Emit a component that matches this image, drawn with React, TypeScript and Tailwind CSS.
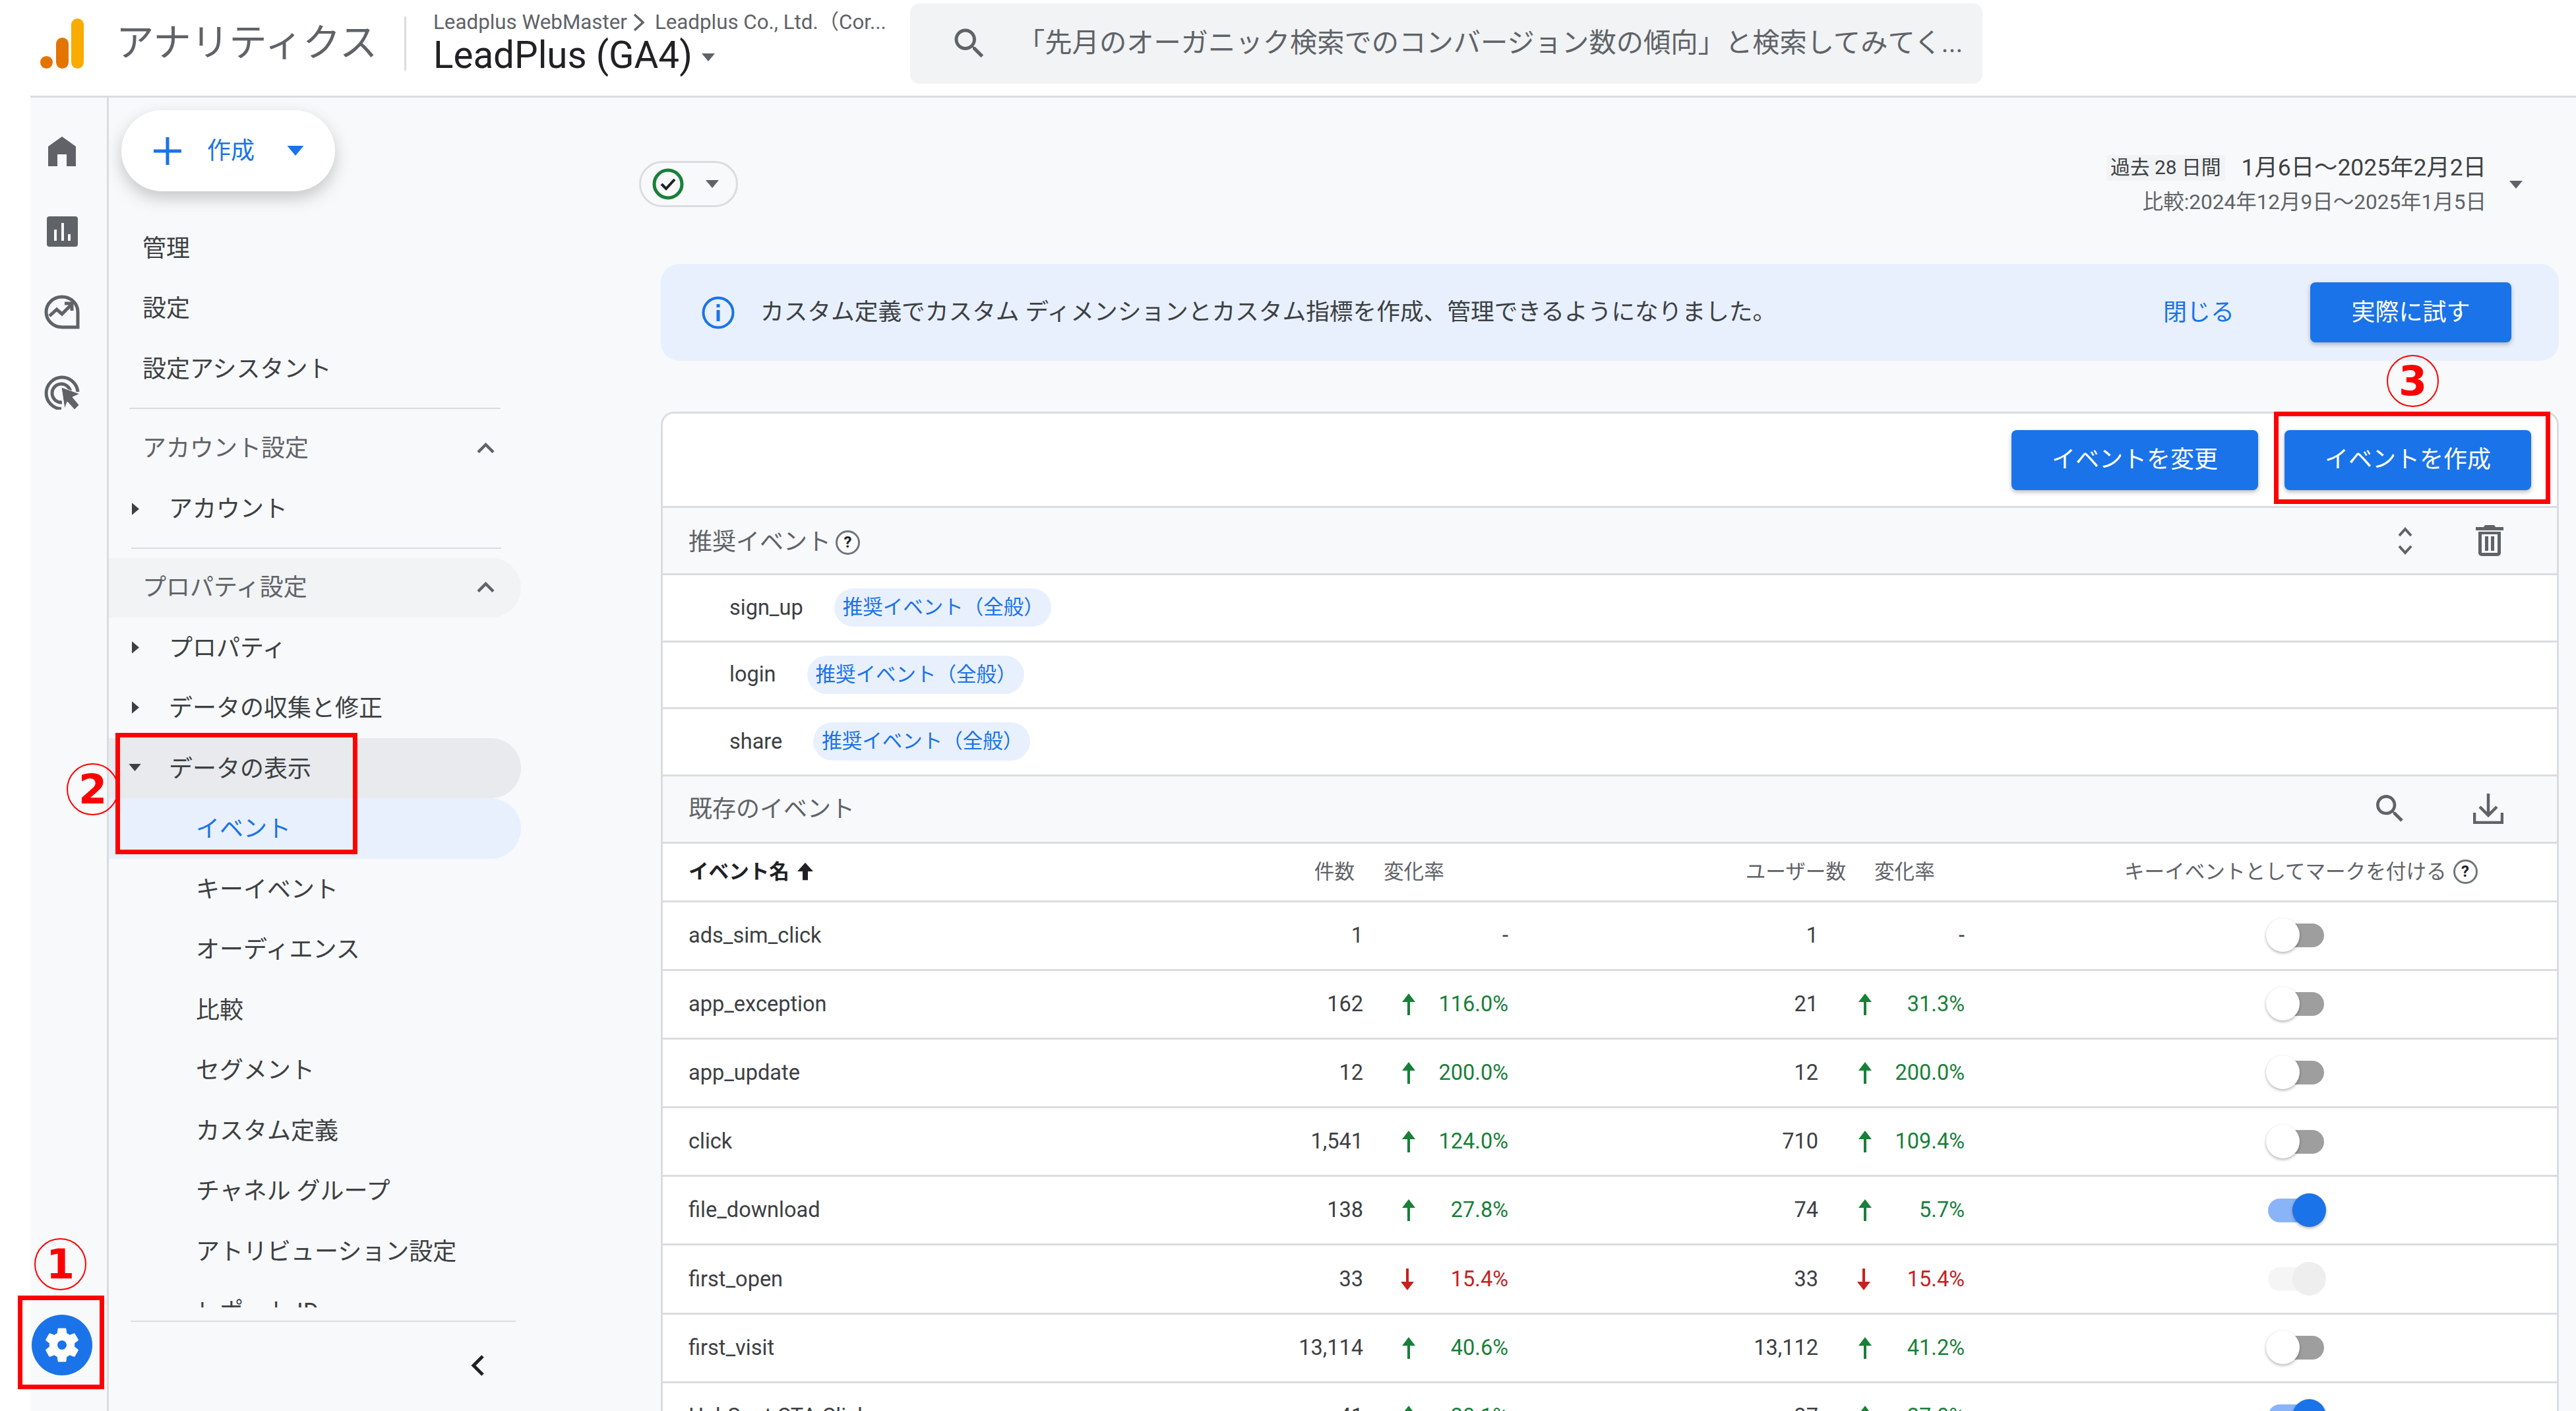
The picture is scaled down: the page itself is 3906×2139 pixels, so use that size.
import { ReactNode } from 'react';

const rows = [
  { name: 'ads_sim_click', count: '1', change: '-', users: '1', userChange: '-', toggle: 'off' },
  { name: 'app_exception', count: '162', change: '116.0%', dir: 'up', users: '21', userChange: '31.3%', userDir: 'up', toggle: 'off' },
  { name: 'app_update', count: '12', change: '200.0%', dir: 'up', users: '12', userChange: '200.0%', userDir: 'up', toggle: 'off' },
  { name: 'click', count: '1,541', change: '124.0%', dir: 'up', users: '710', userChange: '109.4%', userDir: 'up', toggle: 'off' },
  { name: 'file_download', count: '138', change: '27.8%', dir: 'up', users: '74', userChange: '5.7%', userDir: 'up', toggle: 'on' },
  { name: 'first_open', count: '33', change: '15.4%', dir: 'down', users: '33', userChange: '15.4%', userDir: 'down', toggle: 'disabled' },
  { name: 'first_visit', count: '13,114', change: '40.6%', dir: 'up', users: '13,112', userChange: '41.2%', userDir: 'up', toggle: 'off' },
  { name: 'HubSpot CTA Click', count: '41', change: '20.1%', dir: 'up', users: '37', userChange: '27.0%', userDir: 'up', toggle: 'on' },
];

function Caret({ className = '' }: { className?: string }) {
  return (
    <svg viewBox="0 0 10 6" className={className} fill="currentColor">
      <path d="M0 0h10L5 6z" />
    </svg>
  );
}

function Search({ className = '' }: { className?: string }) {
  return (
    <svg viewBox="0 0 24 24" className={className} fill="currentColor">
      <path d="M15.5 14h-.79l-.28-.27C15.41 12.59 16 11.11 16 9.5 16 5.91 13.09 3 9.5 3S3 5.91 3 9.5 5.91 16 9.5 16c1.61 0 3.09-.59 4.23-1.57l.27.28v.79l5 4.99L20.49 19l-4.99-5zm-6 0C7.01 14 5 11.99 5 9.5S7.01 5 9.5 5 14 7.01 14 9.5 11.99 14 9.5 14z" />
    </svg>
  );
}

function Arrow({ dir }: { dir?: string }) {
  if (!dir) return <span className="w-[24px]" />;
  return (
    <svg viewBox="0 0 24 33" className={`w-[24px] h-[33px] ${dir === 'up' ? 'text-[#188038]' : 'text-[#c5221f] rotate-180 -translate-x-[2px]'}`} fill="currentColor">
      <path d="M12 0l10 13h-8v20h-4V13H2z" />
    </svg>
  );
}

function Toggle({ state }: { state: string }) {
  if (state === 'on') {
    return (
      <div className="relative w-[85px] h-[36px] rounded-full bg-[#8ab4f8]">
        <span className="absolute right-[-3px] top-[-8px] w-[51px] h-[51px] rounded-full bg-[#1a73e8] shadow-[0_2px_4px_rgba(0,0,0,0.3)]" />
      </div>
    );
  }
  if (state === 'disabled') {
    return (
      <div className="relative w-[85px] h-[36px] rounded-full bg-[#f5f5f5]">
        <span className="absolute right-[-3px] top-[-8px] w-[51px] h-[51px] rounded-full bg-[#eeeeee]" />
      </div>
    );
  }
  return (
    <div className="relative w-[85px] h-[36px] rounded-full bg-[#9e9e9e]">
      <span className="absolute left-[-3px] top-[-8px] w-[51px] h-[51px] rounded-full bg-white shadow-[0_2px_4px_rgba(0,0,0,0.3)]" />
    </div>
  );
}

function Help({ className = '' }: { className?: string }) {
  return (
    <span className={`inline-flex items-center justify-center w-[37px] h-[37px] rounded-full border-[3px] border-[#70757a] bg-white text-[24px] font-bold leading-none text-[#202124] ${className}`}>
      ?
    </span>
  );
}

function NavItem({ children, arrow, indent, className = '' }: { children: ReactNode; arrow?: 'right' | 'down'; indent?: boolean; className?: string }) {
  return (
    <div className={`relative h-[91.5px] flex items-center shrink-0 rounded-r-full ${indent ? 'pl-[132px]' : 'pl-[91px]'} ${className}`}>
      {arrow === 'right' && (
        <svg viewBox="0 0 6 10" className="absolute left-[35px] top-[36px] w-[11px] h-[19px]" fill="#3c4043"><path d="M0 0l6 5-6 5z" /></svg>
      )}
      {arrow === 'down' && (
        <svg viewBox="0 0 10 6" className="absolute left-[30px] top-[39px] w-[19px] h-[11px]" fill="#3c4043"><path d="M0 0h10L5 6z" /></svg>
      )}
      {children}
    </div>
  );
}

function Chevron({ className = '' }: { className?: string }) {
  return (
    <svg viewBox="0 0 27 16" className={className} fill="none" stroke="#5f6368" strokeWidth="4.5">
      <path d="M2 14.5L13.5 3 25 14.5" />
    </svg>
  );
}

function RecRow({ name }: { name: string }) {
  return (
    <div className="h-[101.5px] shrink-0 flex items-center pl-[101px] gap-[47px] bg-white border-b-[3px] border-[#dadce0]">
      <span className="text-[32.5px] text-[#3c4043]">{name}</span>
      <span className="h-[58px] w-[329px] rounded-full bg-[#e8f0fe] flex items-center pl-[13px] text-[30.5px] text-[#1a73e8] whitespace-nowrap">推奨イベント（全般）</span>
    </div>
  );
}

function TableRow({ row }: { row: (typeof rows)[number] }) {
  return (
    <div className="h-[104.2px] grid grid-cols-[923px_100px_220px_470px_222px_1fr] items-center pl-[39px] bg-white border-b-[3px] border-[#dadce0] text-[32.5px] text-[#3c4043] shrink-0">
      <span className="text-[#3c4043]">{row.name}</span>
      <span className="text-right">{row.count}</span>
      <span className="flex items-center pl-[57px]">
        <Arrow dir={row.dir} />
        <span className={`flex-1 text-right ${row.dir === 'up' ? 'text-[#188038]' : row.dir === 'down' ? 'text-[#c5221f]' : ''}`}>{row.change}</span>
      </span>
      <span className="text-right">{row.users}</span>
      <span className="flex items-center pl-[59px]">
        <Arrow dir={row.userDir} />
        <span className={`flex-1 text-right ${row.userDir === 'up' ? 'text-[#188038]' : row.userDir === 'down' ? 'text-[#c5221f]' : ''}`}>{row.userChange}</span>
      </span>
      <span className="pl-[460px]"><Toggle state={row.toggle} /></span>
    </div>
  );
}

function CircleNum({ n, className = '' }: { n: string; className?: string }) {
  return (
    <span className={`absolute flex items-center justify-center w-[79px] h-[79px] rounded-full border-[2px] border-[#ff0000] text-[#ff0000] text-[62px] font-bold leading-none font-['DejaVu_Sans',sans-serif] ${className}`}>
      {n}
    </span>
  );
}

export default function App() {
  return (
    <div className="relative w-[3906px] h-[2139px] overflow-hidden bg-white flex font-['Roboto','Noto_Sans_CJK_JP',sans-serif] text-[#3c4043]">
      <div className="w-[46px] shrink-0 bg-white" />

      <div className="flex-1 flex flex-col min-w-0">
        {/* Header */}
        <header className="relative h-[148px] shrink-0 flex items-center border-b-[3px] border-[#dadce0] bg-white">
          <svg viewBox="0 0 66 76" className="ml-[15px] w-[66px] h-[76px] -mt-[14px] shrink-0">
            <rect x="0" y="57" width="19" height="19" rx="9.5" fill="#e37400" />
            <rect x="24" y="29" width="19" height="47" rx="9.5" fill="#e37400" />
            <rect x="47" y="0" width="19" height="76" rx="9.5" fill="#f9ab00" />
          </svg>
          <span className="ml-[49px] w-[437px] text-[57.5px] leading-none -mt-[14px] text-[#5f6368] whitespace-nowrap">アナリティクス</span>
          <span className="w-[3px] h-[82px] bg-[#dadce0] -mt-[14px]" />
          <div className="ml-[41px] w-[682px] -mt-[14px] flex flex-col">
            <span className="flex items-center text-[31.3px] leading-[36px] text-[#5f6368] whitespace-nowrap">
              Leadplus WebMaster
              <svg viewBox="0 0 22 30" className="ml-[7px] mr-[13px] w-[22px] h-[30px] shrink-0" fill="none" stroke="#5f6368" strokeWidth="3.5"><path d="M4 3l13 12L4 27" /></svg>
              Leadplus Co., Ltd.（Cor...
            </span>
            <span className="flex items-center text-[56.5px] leading-[64px] text-[#202124]">
              LeadPlus (GA4)
              <Caret className="ml-[12px] mt-[6px] w-[24px] h-[12px] text-[#5f6368]" />
            </span>
          </div>
          <div className="ml-[41px] w-[1626px] h-[122px] -mt-[13px] rounded-[14px] bg-[#f1f3f4] flex items-center pl-[60px]">
            <Search className="w-[60px] h-[60px] text-[#5f6368] shrink-0" />
            <span className="ml-[43px] text-[41.3px] text-[#5f6368] whitespace-nowrap">「先月のオーガニック検索でのコンバージョン数の傾向」と検索してみてく...</span>
          </div>
        </header>

        <div className="flex-1 flex min-h-0 bg-[#f8f9fa]">
          {/* Rail */}
          <nav className="w-[119px] shrink-0 flex flex-col items-center border-r-[3px] border-[#dadce0] pt-[20px] pb-[54px] pr-[20px] text-[#5f6368]">
            <div className="h-[122px] flex items-center justify-center">
              <svg viewBox="0 0 42 45" className="w-[42px] h-[45px]" fill="currentColor">
                <path d="M21 0L0 15v30h14V27h14v18h14V15z" />
              </svg>
            </div>
            <div className="h-[122px] flex items-center justify-center">
              <svg viewBox="0 0 47 46" className="w-[47px] h-[46px]">
                <rect width="47" height="46" rx="4" fill="currentColor" />
                <rect x="11" y="20" width="4" height="17" fill="#f8f9fa" />
                <rect x="22" y="10" width="4" height="27" fill="#f8f9fa" />
                <rect x="32" y="27" width="4" height="10" fill="#f8f9fa" />
              </svg>
            </div>
            <div className="h-[122px] flex items-center justify-center">
              <svg viewBox="0 0 54 52" className="w-[54px] h-[52px]" fill="none" stroke="currentColor" strokeWidth="5">
                <path d="M51 49H27C14 49 3 39 3 26S14 3 27 3s24 10 24 23z" />
                <path d="M8 32l11-10 8 7 13-13" />
                <path d="M31 13h11v11" />
              </svg>
            </div>
            <div className="h-[122px] flex items-center justify-center">
              <svg viewBox="0 0 54 52" className="w-[54px] h-[52px]">
                <path d="M26 51A24 24 0 1 1 51 25" fill="none" stroke="currentColor" strokeWidth="5" />
                <path d="M27 41A14 14 0 1 1 40 27" fill="none" stroke="currentColor" strokeWidth="5" />
                <path d="M26 18l28 10-11 5 10 12-7 7-11-12-4 11z" fill="currentColor" stroke="#f8f9fa" strokeWidth="1" />
              </svg>
            </div>
            <div className="mt-auto w-[92px] h-[92px] rounded-full bg-[#1a73e8] flex items-center justify-center">
              <svg viewBox="0 0 24 24" className="w-[64px] h-[64px]" fill="#ffffff">
                <path d="M19.14 12.94c.04-.3.06-.61.06-.94 0-.32-.02-.64-.07-.94l2.03-1.58c.18-.14.23-.41.12-.61l-1.92-3.32c-.12-.22-.37-.29-.59-.22l-2.39.96c-.5-.38-1.03-.7-1.62-.94l-.36-2.54c-.04-.24-.24-.41-.48-.41h-3.84c-.24 0-.43.17-.47.41l-.36 2.54c-.59.24-1.13.57-1.62.94l-2.39-.96c-.22-.08-.47 0-.59.22L2.74 8.87c-.12.21-.08.47.12.61l2.03 1.58c-.05.3-.09.63-.09.94s.02.64.07.94l-2.03 1.58c-.18.14-.23.41-.12.61l1.92 3.32c.12.22.37.29.59.22l2.39-.96c.5.38 1.03.7 1.62.94l.36 2.54c.05.24.24.41.48.41h3.84c.24 0 .44-.17.47-.41l.36-2.54c.59-.24 1.13-.56 1.62-.94l2.39.96c.22.08.47 0 .59-.22l1.92-3.32c.12-.22.07-.47-.12-.61l-2.01-1.58zM12 14.6c-1.43 0-2.6-1.17-2.6-2.6s1.17-2.6 2.6-2.6 2.6 1.17 2.6 2.6-1.17 2.6-2.6 2.6z" />
              </svg>
            </div>
          </nav>

          {/* Sidebar */}
          <aside className="w-[640px] shrink-0 flex flex-col text-[36px] text-[#3c4043]">
            <div className="flex-1 min-h-0 overflow-hidden">
              <div className="mt-[19px] ml-[19px] w-[324px] h-[123px] rounded-[62px] bg-white shadow-[0_10px_24px_rgba(60,64,67,0.28)] flex items-center pl-[49px] text-[#1a73e8]">
                <svg viewBox="0 0 42 42" className="w-[42px] h-[42px]" stroke="currentColor" strokeWidth="5"><path d="M21 0v42M0 21h42" /></svg>
                <span className="ml-[21px] pl-[18px]">作成</span>
                <Caret className="ml-[49px] w-[26px] h-[15px]" />
              </div>
              <div className="mt-[41px] flex flex-col">
                <div className="h-[91.5px] flex items-center pl-[51px]">管理</div>
                <div className="h-[91.5px] flex items-center pl-[51px]">設定</div>
                <div className="h-[91.5px] flex items-center pl-[51px]">設定アシスタント</div>
              </div>
              <div className="mt-[12px] ml-[31px] w-[563px] h-[2px] bg-[#dadce0]" />
              <div className="mt-[15px] relative h-[91.5px] flex items-center pl-[51px] text-[#5f6368]">
                アカウント設定
                <Chevron className="absolute left-[558px] top-[36px] w-[27px] h-[16px]" />
              </div>
              <NavItem arrow="right">アカウント</NavItem>
              <div className="mt-[12px] ml-[34px] w-[561px] h-[2px] bg-[#dadce0]" />
              <div className="mt-[14.5px] relative h-[89.5px] w-[625px] flex items-center pl-[51px] rounded-r-full bg-[#f1f3f4] text-[#5f6368]">
                プロパティ設定
                <Chevron className="absolute left-[558px] top-[36px] w-[27px] h-[16px]" />
              </div>
              <NavItem arrow="right" className="pt-[3px]">プロパティ</NavItem>
              <NavItem arrow="right" className="pt-[3px]">データの収集と修正</NavItem>
              <NavItem arrow="down" className="pt-[3px] w-[625px] bg-[#e8eaed]">データの表示</NavItem>
              <NavItem indent className="pt-[3px] w-[625px] bg-[#e8f0fe] text-[#1a73e8]">イベント</NavItem>
              <NavItem indent className="pt-[3px]">キーイベント</NavItem>
              <NavItem indent className="pt-[3px]">オーディエンス</NavItem>
              <NavItem indent className="pt-[3px]">比較</NavItem>
              <NavItem indent className="pt-[3px]">セグメント</NavItem>
              <NavItem indent className="pt-[3px]">カスタム定義</NavItem>
              <NavItem indent className="pt-[3px]">チャネル グループ</NavItem>
              <NavItem indent className="pt-[3px]">アトリビューション設定</NavItem>
              <NavItem indent className="pt-[3px]">レポート ID</NavItem>
            </div>
            <div className="h-[157px] shrink-0 pt-[20px]">
              <div className="ml-[33px] w-[584px] h-[2px] bg-[#dadce0]" />
              <svg viewBox="0 0 22 34" className="ml-[548px] mt-[49px] w-[22px] h-[34px]" fill="none" stroke="#202124" strokeWidth="5">
                <path d="M19 3L5 17l14 14" />
              </svg>
            </div>
          </aside>

          {/* Main */}
          <main className="flex-1 min-w-0 flex flex-col pr-[26px] pl-[197px]">
            <div className="flex justify-between items-start mt-[87px] h-[98px] -ml-[33px]">
              <div className="mt-[9px] w-[150px] h-[70px] rounded-full border-[3px] border-[#dadce0] flex items-center pl-[17px]">
                <svg viewBox="0 0 48 48" className="w-[48px] h-[48px]" fill="none">
                  <circle cx="24" cy="24" r="21" stroke="#188038" strokeWidth="5" />
                  <path d="M14 24l7 7 13-14" stroke="#202124" strokeWidth="4" />
                </svg>
                <Caret className="ml-[33px] w-[20px] h-[12px] text-[#5f6368]" />
              </div>
              <div className="flex items-center pr-[55px]">
                <div className="flex flex-col items-end">
                  <div className="flex items-center">
                    <span className="h-[39px] px-[6px] rounded-[4px] bg-[#f1f3f4] flex items-center text-[29.8px] text-[#3c4043] whitespace-nowrap">過去 28 日間</span>
                    <span className="ml-[25px] text-[35.4px] leading-[39px] text-[#3c4043] whitespace-nowrap">1月6日～2025年2月2日</span>
                  </div>
                  <span className="mt-[15px] text-[31.5px] leading-[36px] text-[#5f6368] whitespace-nowrap">比較:2024年12月9日～2025年1月5日</span>
                </div>
                <Caret className="ml-[35px] w-[20px] h-[12px] text-[#5f6368]" />
              </div>
            </div>

            <div className="mt-[67px] h-[147px] shrink-0 rounded-[28px] bg-[#e8f0fe] flex items-center pl-[62px] pr-[72px] text-[36px]">
              <svg viewBox="0 0 50 50" className="w-[50px] h-[50px] shrink-0" fill="none">
                <circle cx="25" cy="25" r="22.5" stroke="#1a73e8" strokeWidth="4" />
                <rect x="22.5" y="21" width="5" height="17" fill="#1a73e8" />
                <rect x="22.5" y="12" width="5" height="5" fill="#1a73e8" />
              </svg>
              <span className="ml-[39px] text-[35.7px] text-[#3c4043] whitespace-nowrap">カスタム定義でカスタム ディメンションとカスタム指標を作成、管理できるようになりました。</span>
              <span className="ml-auto text-[#1a73e8]">閉じる</span>
              <button className="ml-[115px] w-[305px] h-[91px] rounded-[8px] bg-[#1a73e8] text-white shadow-[0_3px_6px_rgba(60,64,67,0.35)]">実際に試す</button>
            </div>

            {/* Card */}
            <div className="mt-[77px] flex-1 min-h-0 overflow-hidden rounded-t-[20px] border-[3px] border-b-0 border-[#dadce0] flex flex-col">
              <div className="h-[143px] shrink-0 flex items-center justify-end gap-[40px] pr-[39px] bg-white border-b-[3px] border-[#dadce0] text-[36px]">
                <button className="w-[374px] h-[91px] rounded-[8px] bg-[#1a73e8] text-white shadow-[0_3px_6px_rgba(60,64,67,0.35)]">イベントを変更</button>
                <button className="w-[374px] h-[91px] rounded-[8px] bg-[#1a73e8] text-white shadow-[0_3px_6px_rgba(60,64,67,0.35)]">イベントを作成</button>
              </div>

              <div className="h-[102px] shrink-0 flex items-center pl-[39px] pr-[81px] border-b-[3px] border-[#dadce0] text-[36px] text-[#5f6368]">
                <span className="flex items-center pt-[5px]">
                  推奨イベント
                  <Help className="ml-[7px]" />
                </span>
                <svg viewBox="0 0 24 44" className="ml-auto w-[24px] h-[44px]" fill="none" stroke="#5f6368" strokeWidth="4">
                  <path d="M3 14l9-10 9 10M3 30l9 10 9-10" />
                </svg>
                <svg viewBox="0 0 42 47" className="ml-[95px] w-[42px] h-[47px]" fill="#5f6368">
                  <path d="M14 0h14l2 3h12v5H0V3h12zM4 10h34v32a5 5 0 0 1-5 5H9a5 5 0 0 1-5-5zm5 4v28h24V14z" />
                  <rect x="14" y="17" width="5" height="22" />
                  <rect x="23" y="17" width="5" height="22" />
                </svg>
              </div>

              <RecRow name="sign_up" />
              <RecRow name="login" />
              <RecRow name="share" />

              <div className="h-[102px] shrink-0 flex items-center pl-[39px] pr-[81px] border-b-[3px] border-[#dadce0] text-[36px] text-[#5f6368]">
                <span className="pt-[2px]">既存のイベント</span>
                <Search className="ml-auto w-[56px] h-[56px]" />
                <svg viewBox="0 0 46 46" className="ml-[98px] w-[46px] h-[46px]" fill="none" stroke="#5f6368" strokeWidth="4.5">
                  <path d="M23 0v32M10 20l13 13 13-13" />
                  <path d="M2 29v15h42V29" />
                </svg>
              </div>

              <div className="h-[89px] shrink-0 grid grid-cols-[923px_100px_220px_470px_222px_1fr] items-center pl-[39px] bg-white border-b-[3px] border-[#dadce0] text-[30.6px] text-[#5f6368]">
                <span className="flex items-center font-bold text-[#202124]">
                  イベント名
                  <svg viewBox="0 0 24 24" className="ml-[8px] w-[32px] h-[32px]" fill="#202124"><path d="M12 2l9 10h-6v10H9V12H3z" /></svg>
                </span>
                <span className="text-right pr-[13px]">件数</span>
                <span className="pl-[31px]">変化率</span>
                <span className="text-right -mr-[42px]">ユーザー数</span>
                <span className="pl-[85px]">変化率</span>
                <span className="flex items-center pl-[242px] whitespace-nowrap">
                  キーイベントとしてマークを付ける
                  <Help className="ml-[10px]" />
                </span>
              </div>

              {rows.map(row => <TableRow key={row.name} row={row} />)}
            </div>
          </main>
        </div>
      </div>

      {/* Red annotations */}
      <div className="absolute left-[27px] top-[1964px] w-[131px] h-[142px] border-[7px] border-[#ff0000]" />
      <CircleNum n="1" className="left-[52px] top-[1877px]" />
      <div className="absolute left-[175px] top-[1111px] w-[367px] h-[184px] border-[7px] border-[#ff0000]" />
      <CircleNum n="2" className="left-[101px] top-[1157px]" />
      <div className="absolute left-[3448px] top-[624px] w-[419px] h-[140px] border-[7px] border-[#ff0000]" />
      <CircleNum n="3" className="left-[3619px] top-[538px]" />
    </div>
  );
}
